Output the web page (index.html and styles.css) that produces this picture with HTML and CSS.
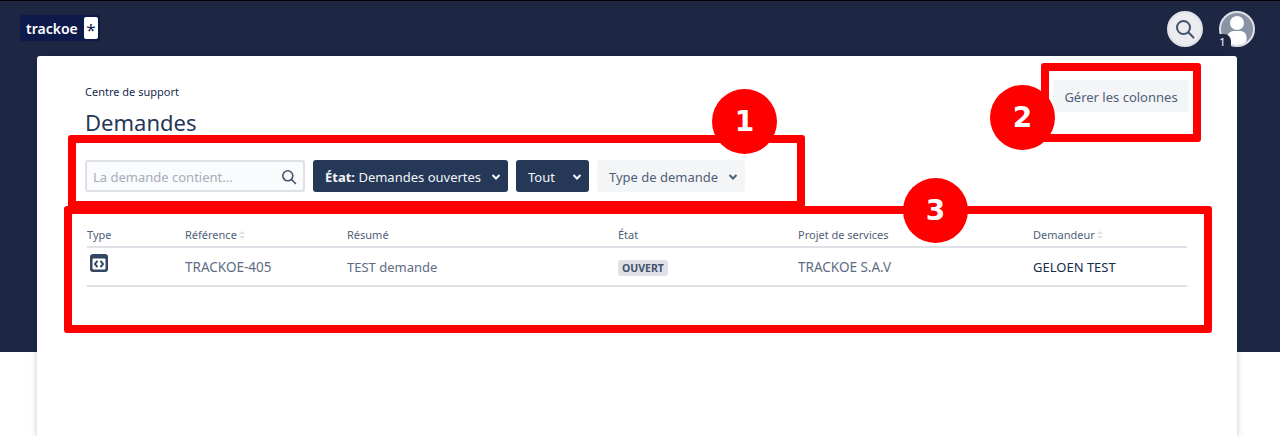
FILE: index.html
```html
<!DOCTYPE html>
<html lang="fr">
<head>
    <meta charset="UTF-8">
    <title>Demandes - Centre de support</title>
    <link rel="stylesheet" href="styles.css">
</head>
<body>
    <header class="topbar">
        <div class="logo">
            <span class="logo-name">trackoe</span>
            <span class="logo-star">*</span>
        </div>
        <div class="topbar-actions">
            <div class="round-btn search-btn">
                <svg width="22" height="22" viewBox="0 0 22 22" fill="none" stroke="#42526e" stroke-width="2" stroke-linecap="round"><circle cx="9.5" cy="9.5" r="6.5"/><path d="M14.5 14.5l5 5"/></svg>
            </div>
            <div class="round-btn avatar">
                <svg class="avatar-pic" width="32" height="32" viewBox="0 0 32 32" fill="#fff"><circle cx="16" cy="10" r="7"/><rect x="6.500" y="18" width="19" height="15" rx="6"/></svg>
                <span class="avatar-count">1</span>
            </div>
        </div>
    </header>

    <main class="card">
        <div class="page-head">
            <div>
                <div class="crumb">Centre de support</div>
                <h1>Demandes</h1>
            </div>
            <button class="btn btn-light columns-btn">Gérer les colonnes</button>
        </div>

        <div class="filters">
            <div class="search-field">
                <span>La demande contient...</span>
                <svg width="16" height="16" viewBox="0 0 16 16" fill="none" stroke="#42526e" stroke-width="1.6" stroke-linecap="round"><circle cx="6.8" cy="6.8" r="5"/><path d="M10.5 10.5l4 4"/></svg>
            </div>
            <button class="btn btn-dark state-btn"><span><b>État:</b> Demandes ouvertes</span><svg class="chevron" width="10" height="8" viewBox="0 0 10 8"><path d="M1.5 2l3.500 3.500L8.500 2" fill="none" stroke="currentColor" stroke-width="2"/></svg></button>
            <button class="btn btn-dark all-btn"><span>Tout</span><svg class="chevron" width="10" height="8" viewBox="0 0 10 8"><path d="M1.5 2l3.500 3.500L8.500 2" fill="none" stroke="currentColor" stroke-width="2"/></svg></button>
            <button class="btn btn-light type-btn"><span>Type de demande</span><svg class="chevron" width="10" height="8" viewBox="0 0 10 8"><path d="M1.5 2l3.500 3.500L8.500 2" fill="none" stroke="currentColor" stroke-width="2"/></svg></button>
        </div>

        <table class="requests">
            <thead>
                <tr>
                    <th class="col-type">Type</th>
                    <th class="col-ref">Référence<svg class="sort" width="6" height="8" viewBox="0 0 6 8"><path d="M3 0l3 3H0zM3 8L0 5h6z"/></svg></th>
                    <th class="col-summary">Résumé</th>
                    <th class="col-state">État</th>
                    <th class="col-project">Projet de services</th>
                    <th class="col-owner">Demandeur<svg class="sort" width="6" height="8" viewBox="0 0 6 8"><path d="M3 0l3 3H0zM3 8L0 5h6z"/></svg></th>
                </tr>
            </thead>
            <tbody>
                <tr>
                    <td class="type-cell"><svg width="18" height="18" viewBox="0 0 18 18"><rect width="18" height="18" rx="3" fill="#344563"/><rect x="2.500" y="4.500" width="13" height="11" rx="1" fill="#fff"/><path d="M7.500 6.800L5 10l2.500 3.200M10.500 6.800L13 10l-2.500 3.200" fill="none" stroke="#344563" stroke-width="2"/></svg></td>
                    <td class="caps">TRACKOE-405</td>
                    <td>TEST demande</td>
                    <td><span class="status">OUVERT</span></td>
                    <td class="caps">TRACKOE S.A.V</td>
                    <td class="owner">GELOEN TEST</td>
                </tr>
            </tbody>
        </table>
    </main>

    <!-- annotations posees sur la capture -->
    <div class="frame frame-1"></div>
    <div class="frame frame-2"></div>
    <div class="frame frame-3"></div>
    <div class="bubble bubble-1">1</div>
    <div class="bubble bubble-2">2</div>
    <div class="bubble bubble-3">3</div>
</body>
</html>
```

FILE: styles.css
```css
html, body {
    height: 436px;
    overflow: hidden;
}
body {
    position: relative;
    margin: 0;
    font-family: "Noto Sans", sans-serif;
    font-size: 13px;
    color: #172b4d;
    background: linear-gradient(#1d2744 352px, #fff 352px);
}
.topbar {
    display: flex;
    align-items: center;
    justify-content: space-between;
    box-sizing: border-box;
    height: 56px;
    padding: 0 25px 0 20px;
    border-top: 1px solid #000;
}
.logo {
    display: flex;
    align-items: center;
    justify-content: space-between;
    box-sizing: border-box;
    width: 80px;
    height: 26px;
    margin-top: -1px;
    padding: 0 2px 0 6px;
    border-radius: 2px;
    background: #0e1a4a;
}
.logo-name {
    color: #fff;
    font-size: 14px;
    font-weight: 600;
}
.logo-star {
    width: 14px;
    height: 22px;
    border-radius: 2px;
    background: #fff;
    color: #0e1a4a;
    font-size: 17px;
    line-height: 26px;
    text-align: center;
}
.topbar-actions {
    display: flex;
    gap: 16px;
}
.round-btn {
    position: relative;
    display: flex;
    align-items: center;
    justify-content: center;
    box-sizing: border-box;
    width: 36px;
    height: 36px;
    border: 2px solid #dfe1e6;
    border-radius: 50%;
}
.search-btn {
    background: #ebecf0;
}
.avatar {
    background: #8993a4;
}
.avatar-pic {
    flex: none;
    border-radius: 50%;
}
.avatar-count {
    position: absolute;
    left: -2px;
    bottom: -3px;
    box-sizing: border-box;
    width: 12px;
    height: 14px;
    padding-right: 5px;
    border-top-right-radius: 7px;
    background: #1d2744;
    color: #fff;
    font-size: 11px;
    line-height: 15px;
    text-align: center;
}

.card {
    box-sizing: border-box;
    width: 1200px;
    height: 380px;
    margin-left: 37px;
    padding: 24px 48px;
    border-radius: 3px 3px 0 0;
    background: #fff;
    box-shadow: 0 1px 6px rgba(9, 30, 66, 0.25);
}
.page-head {
    display: flex;
    justify-content: space-between;
    align-items: flex-start;
}
.crumb {
    margin-top: 4px;
    font-size: 11px;
    line-height: 16px;
}
h1 {
    margin: 6px 0 1px;
    color: #253858;
    font-size: 22px;
    font-weight: 400;
    line-height: 32px;
}
.filters {
    display: flex;
    gap: 8px;
    margin-top: 21px;
}
.btn {
    display: flex;
    align-items: center;
    justify-content: space-between;
    box-sizing: border-box;
    height: 32px;
    padding: 1px 12px 0;
    border: none;
    border-radius: 3px;
    font-family: inherit;
    font-size: 13px;
    white-space: nowrap;
}
.btn-dark {
    background: #253858;
    color: #f4f5f7;
}
.btn-light {
    background: #f4f5f7;
    color: #505f79;
}
.columns-btn {
    width: 136px;
    justify-content: center;
    padding: 2px 0 0;
}
.search-field {
    display: flex;
    align-items: center;
    justify-content: space-between;
    box-sizing: border-box;
    width: 220px;
    height: 32px;
    padding: 1px 6px 0 6px;
    border: 2px solid #dfe1e6;
    border-radius: 3px;
    background: #fafbfc;
    color: #a5adba;
    font-size: 13px;
}
.state-btn {
    width: 195px;
    padding-right: 7px;
}
.all-btn {
    width: 73px;
    padding-right: 7px;
}
.type-btn {
    width: 148px;
    padding-right: 7px;
}

.requests {
    width: 1100px;
    margin: 33px 0 0 2px;
    border-collapse: collapse;
    table-layout: fixed;
}
th {
    height: 18px;
    padding: 0 0 3px;
    border-bottom: 2px solid #dfe1e6;
    color: #505f79;
    font-size: 11px;
    font-weight: 400;
    text-align: left;
}
td {
    height: 37px;
    padding: 0;
    border-bottom: 2px solid #dfe1e6;
    color: #5e6c84;
    font-size: 13px;
}
.col-type { width: 98px; }
.col-ref { width: 162px; }
.col-summary { width: 271px; }
.col-state { width: 180px; }
.col-project { width: 235px; }
.col-owner { width: 154px; }
.sort {
    margin-left: 2px;
    fill: #dfe1e6;
}
.type-cell svg {
    display: block;
    margin: -7px 0 0 3px;
}
td.caps {
    font-size: 13.5px;
}
.status {
    display: inline-block;
    padding: 0 4px;
    border-radius: 3px;
    background: #dfe1e6;
    color: #42526e;
    font-size: 10.5px;
    font-weight: 700;
    line-height: 16px;
}
td.owner {
    color: #172b4d;
}

.frame {
    position: absolute;
    box-sizing: border-box;
    border: 8px solid #f00;
    border-radius: 3px;
}
.frame-1 {
    left: 68px;
    top: 135px;
    width: 737px;
    height: 74px;
}
.frame-2 {
    left: 1041px;
    top: 63px;
    width: 160px;
    height: 79px;
}
.frame-3 {
    left: 64px;
    top: 206px;
    width: 1148px;
    height: 127px;
}
.bubble {
    position: absolute;
    width: 65px;
    height: 65px;
    border-radius: 50%;
    background: #f00;
    color: #fff;
    font-family: "DejaVu Sans", sans-serif;
    font-size: 28px;
    font-weight: 700;
    line-height: 65px;
    text-align: center;
}
.bubble-1 {
    left: 712px;
    top: 89px;
}
.bubble-2 {
    left: 990px;
    top: 85px;
}
.bubble-3 {
    left: 903px;
    top: 178px;
}
```
